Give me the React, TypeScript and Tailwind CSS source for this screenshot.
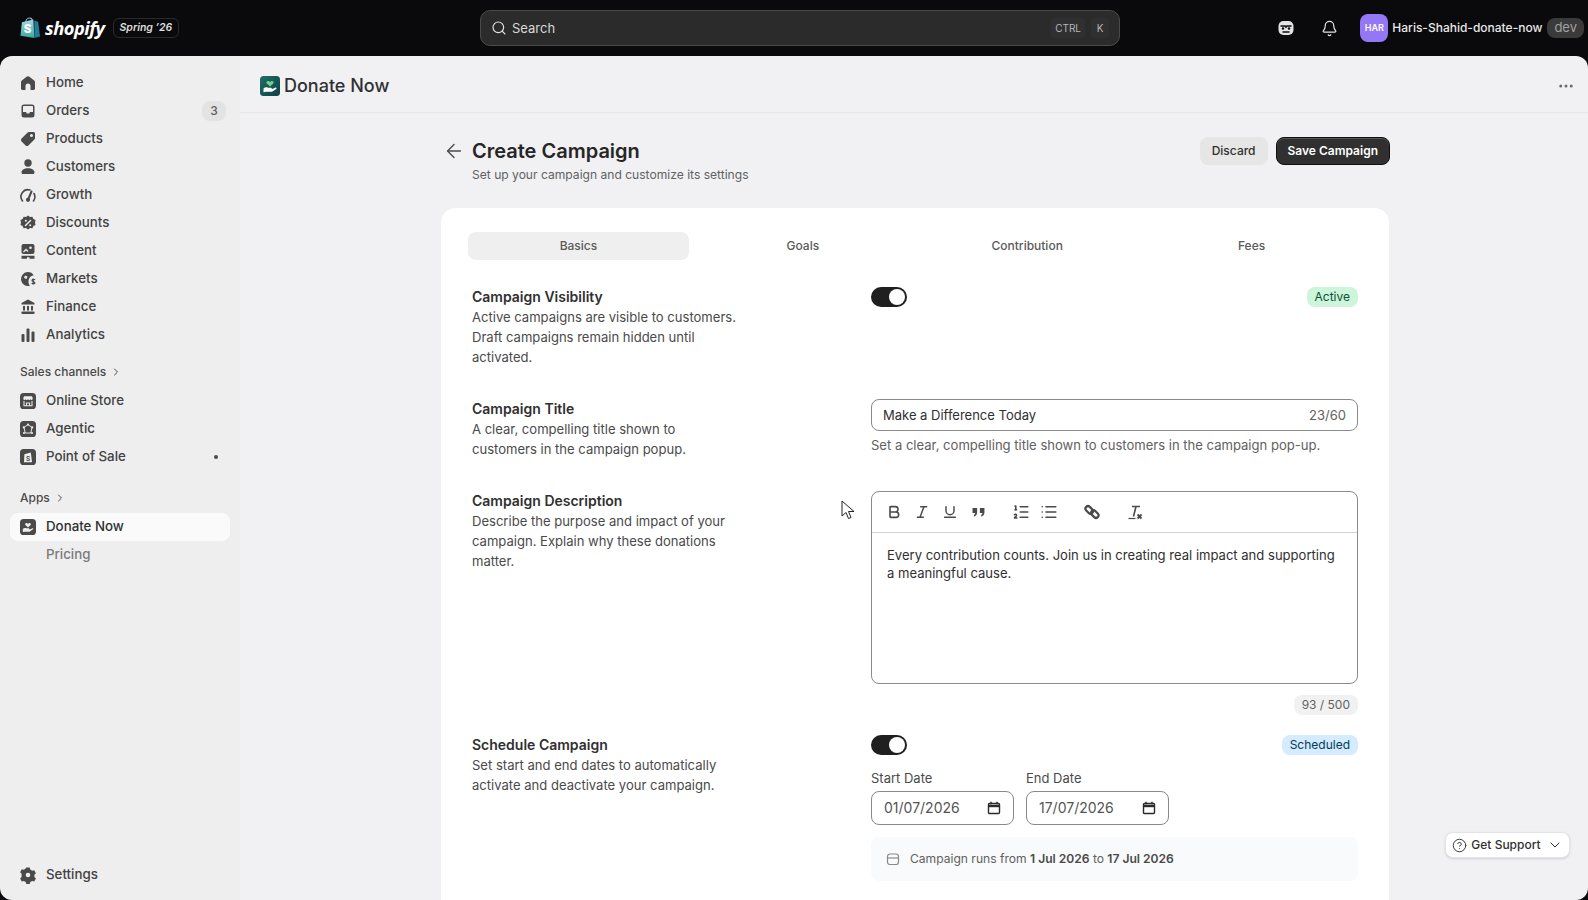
import { ArrowLeft, Bell, Bold, ChevronDown, ChevronRight, CircleHelp, Italic, List, ListOrdered, MoreHorizontal, Search, Underline } from 'lucide-react';
import type { ReactNode } from 'react';

const fill = 'w-5 h-5 shrink-0 text-[#4a4a4a]';

const HomeIcon = () => (
  <svg viewBox="0 0 20 20" className={fill} fill="currentColor"><path d="M10 3.2c-.5 0-1 .2-1.400.5L3.800 7.500c-.5.4-.8 1-.8 1.700v6.300c0 .8.700 1.500 1.500 1.500H7.500V13a2.500 2.500 0 0 1 5 0v4h3c.8 0 1.500-.7 1.500-1.500V9.200c0-.7-.3-1.300-.8-1.700l-4.800-3.800c-.4-.3-.9-.5-1.400-.5Z" /></svg>
);
const OrdersIcon = () => (
  <svg viewBox="0 0 20 20" className={fill} fill="currentColor"><path fillRule="evenodd" d="M6 3.500A2.500 2.500 0 0 0 3.500 6v8A2.500 2.500 0 0 0 6 16.500h8a2.500 2.500 0 0 0 2.500-2.500V6A2.500 2.500 0 0 0 14 3.500H6Zm-1 7.500V6c0-.6.400-1 1-1h8c.6 0 1 .4 1 1v5h-2.500c-.6 0-1 .5-1.100 1l-.1.500H8.700l-.1-.5c-.1-.5-.5-1-1.100-1H5Z" /></svg>
);
const TagIcon = () => (
  <svg viewBox="0 0 20 20" className={fill} fill="currentColor"><path fillRule="evenodd" d="M11 3h4.500C16.300 3 17 3.700 17 4.500V9c0 .5-.2 1-.6 1.400l-6 6c-.8.800-2 .800-2.800 0l-4-4c-.8-.8-.8-2 0-2.800l6-6C10 3.200 10.500 3 11 3Zm2.500 5a1.500 1.500 0 1 0 0-3 1.500 1.500 0 0 0 0 3Z" /></svg>
);
const PersonIcon = () => (
  <svg viewBox="0 0 20 20" className={fill} fill="currentColor"><circle cx="10" cy="6" r="3.700" /><path d="M3.500 15.500c0-2.500 2.500-4.200 6.500-4.200s6.500 1.700 6.500 4.200c0 1-.8 1.500-1.700 1.500H5.200c-.9 0-1.700-.5-1.700-1.500Z" /></svg>
);
const GrowthIcon = () => (
  <svg viewBox="0 0 20 20" className={fill} fill="none" stroke="currentColor" strokeWidth="1.600" strokeLinecap="round"><path d="M4.500 16a7 7 0 0 1 7.500-11" /><path d="M16 8.500a7 7 0 0 1-.5 7.500" /><path d="M13.500 6.500 10.500 13.500" strokeWidth="2" /><circle cx="10" cy="14.800" r="1.300" fill="currentColor" /></svg>
);
const DiscountIcon = () => (
  <svg viewBox="0 0 20 20" className={fill}><path fill="currentColor" d="M10 2.500l2 1.400 2.400-.2 1 2.200 2.100 1.200-.5 2.400.5 2.400-2.100 1.200-1 2.200-2.400-.2-2 1.400-2-1.400-2.400.2-1-2.200-2.100-1.200.5-2.400-.5-2.400 2.100-1.200 1-2.200 2.400.2Z" /><path d="M12.500 7.500l-5 5" stroke="#eee" strokeWidth="1.500" strokeLinecap="round" /><circle cx="7.800" cy="7.800" r="1" fill="#eee" /><circle cx="12.200" cy="12.200" r="1" fill="#eee" /></svg>
);
const ContentIcon = () => (
  <svg viewBox="0 0 20 20" className={fill}><rect x="3.500" y="3" width="13" height="10" rx="2" fill="currentColor" /><path d="M5.500 11l2.500-2.500 2 2" stroke="#eee" strokeWidth="1.300" fill="none" /><circle cx="12.500" cy="6.800" r="1.300" fill="#eee" /><path d="M3.500 15.500h13M3.500 17h5.500M11.500 17h5" stroke="currentColor" strokeWidth="1.300" /></svg>
);
const MarketsIcon = () => (
  <svg viewBox="0 0 20 20" className={fill}><path fill="currentColor" d="M10 3a7 7 0 1 0 2 13.700c-1-1-1.500-2.400-1.500-4 0-3.500 2.200-6 5.300-6.400A7 7 0 0 0 10 3Z" /><path d="M7 6.500l2.500 1-1 2.500-2.500-1Z" fill="#eee" /><path d="M17 10.800c-.4-.6-2.500-1-3 .3-.5 1.500 3 1.200 2.900 2.800-.1 1.200-2.500 1.100-3.300.4M15.200 9.500v6" stroke="currentColor" strokeWidth="1.200" fill="none" /></svg>
);
const FinanceIcon = () => (
  <svg viewBox="0 0 20 20" className={fill} fill="currentColor"><path d="M10 2.500 3.500 6v1.500h13V6L10 2.500Z" /><path d="M5 9h2v4.500H5zM9 9h2v4.500H9zM13 9h2v4.500h-2z" /><rect x="3.500" y="14.500" width="13" height="2.500" rx=".8" /></svg>
);
const AnalyticsIcon = () => (
  <svg viewBox="0 0 20 20" className={fill} fill="currentColor"><rect x="3.500" y="9" width="3" height="8" rx="1" /><rect x="8.500" y="3.500" width="3" height="13.500" rx="1" /><rect x="13.500" y="6.500" width="3" height="10.500" rx="1" /></svg>
);
const SettingsIcon = () => (
  <svg viewBox="0 0 20 20" className={fill}><path fill="currentColor" d="M8.300 2.800h3.400l.6 2 1.900 1.100 2-.5 1.700 3-1.500 1.500v2.200l1.500 1.500-1.700 3-2-.5-1.900 1.100-.6 2H8.300l-.6-2-1.900-1.100-2 .5-1.700-3 1.500-1.500V8.900L2.100 7.400l1.700-3 2 .5 1.900-1.100Z" transform="translate(0 -.2)" /><circle cx="10" cy="10" r="2.300" fill="#eee" /></svg>
);
const Tile = ({ children }: { children: ReactNode }) => (
  <svg viewBox="0 0 20 20" className="w-4 h-4 shrink-0 m-0.5"><rect width="20" height="20" rx="4.500" fill="#4a4a4a" />{children}</svg>
);
const StoreIcon = () => (
  <Tile><path d="M4 7l1-3h10l1 3c0 2-2.500 2-3 .8C12.500 9 10.700 9 10 7.800 9.300 9 7.500 9 7 7.800 6.500 9 4 9 4 7Z" fill="#eee" /><path d="M5 10v6h10v-6M8 16v-3.500h4V16" stroke="#eee" strokeWidth="1.300" fill="none" /></Tile>
);
const AgenticIcon = () => (
  <Tile><path d="M10 4.500 15 8l-1.500 7h-7L5 8Z" stroke="#eee" strokeWidth="1.200" fill="none" /><circle cx="10" cy="4.500" r="1.300" fill="#eee" /><circle cx="4.700" cy="8" r="1.300" fill="#eee" /><circle cx="15.300" cy="8" r="1.300" fill="#eee" /><circle cx="5" cy="15" r="1.300" fill="#eee" /><circle cx="15" cy="15" r="1.300" fill="#eee" /></Tile>
);
const PosIcon = () => (
  <Tile><path d="M5.500 6.500 13.500 4.500 15 16.500H5Z" fill="#eee" /><text x="10" y="14.500" fontSize="8" fontWeight="700" textAnchor="middle" fill="#4a4a4a" fontFamily="Inter, sans-serif">S</text></Tile>
);
const DonateTile = () => (
  <Tile><path d="M10 10.500 6.800 7.500c-1.400-1.500.8-3.500 2.300-2.200l.9.800.9-.8c1.500-1.300 3.700.7 2.300 2.200Z" fill="#eee" /><path d="M3.500 12.500c1.500-1.500 3-1.500 4.500-.8h3c1 0 1 1.500 0 1.500H9l4-.5 2.500-1.200c1-.3 1.500.8.700 1.400L12 15.800H6l-2.500.5Z" fill="#eee" /></Tile>
);

const mainNav = [
  { label: 'Home', icon: <HomeIcon /> },
  { label: 'Orders', icon: <OrdersIcon />, badge: '3' },
  { label: 'Products', icon: <TagIcon /> },
  { label: 'Customers', icon: <PersonIcon /> },
  { label: 'Growth', icon: <GrowthIcon /> },
  { label: 'Discounts', icon: <DiscountIcon /> },
  { label: 'Content', icon: <ContentIcon /> },
  { label: 'Markets', icon: <MarketsIcon /> },
  { label: 'Finance', icon: <FinanceIcon /> },
  { label: 'Analytics', icon: <AnalyticsIcon /> },
];

const NavItem = ({ icon, label, badge, dot, active }: { icon?: ReactNode; label: string; badge?: string; dot?: boolean; active?: boolean }) => (
  <div className={`h-7 flex items-center gap-2 px-2 rounded-lg ${active ? 'bg-[#fafafa] text-[#303030]' : 'text-[#424242]'}`}>
    {icon ?? <span className="w-5 h-5 shrink-0" />}
    <span className={`text-[13.300px] font-medium flex-1 ${icon ? '' : 'text-[#7a7a7a]'}`}>{label}</span>
    {badge && <span className="w-6 h-5 -mr-1 rounded-lg bg-[#e3e3e3] text-[#616161] text-xs font-medium flex items-center justify-center">{badge}</span>}
    {dot && <span className="w-1 h-1 mr-1 rounded-full bg-[#4a4a4a]" />}
  </div>
);

const SectionHead = ({ label }: { label: string }) => (
  <div className="h-5 px-2.5 flex items-center gap-1 text-xs font-medium text-[#4a4a4a]">
    {label}
    <ChevronRight className="w-3 h-3" strokeWidth={2} />
  </div>
);

const Sidebar = () => (
  <aside className="w-60 shrink-0 bg-[#eeeeee] flex flex-col justify-between px-2.5 pt-[13px] pb-[11px]">
    <div>
      {mainNav.map((n) => <NavItem key={n.label} {...n} />)}
      <div className="mt-[13px] mb-[5px]"><SectionHead label="Sales channels" /></div>
      <NavItem icon={<StoreIcon />} label="Online Store" />
      <NavItem icon={<AgenticIcon />} label="Agentic" />
      <NavItem icon={<PosIcon />} label="Point of Sale" dot />
      <div className="mt-[17px] mb-[5px]"><SectionHead label="Apps" /></div>
      <NavItem icon={<DonateTile />} label="Donate Now" active />
      <NavItem label="Pricing" />
    </div>
    <NavItem icon={<SettingsIcon />} label="Settings" />
  </aside>
);

const TopBar = () => (
  <header className="h-14 shrink-0 flex items-center text-white">
    <div className="w-[480px] shrink-0 flex items-center pl-5">
      <svg viewBox="0 0 22 24" className="w-[21px] h-[23px]">
        <defs><linearGradient id="bag" x1="0" y1="0" x2="0" y2="1"><stop offset="0" stopColor="#a9d8ee" /><stop offset="1" stopColor="#3aa89a" /></linearGradient></defs>
        <path d="M2 5.500 14 2.500 15 22 0.500 19.500Z" fill="url(#bag)" />
        <path d="M15 3.500 19 5l2 15.500-6 1.500Z" fill="#1f7f96" />
        <path d="M6 6c0-3 2-5 4-5s3 2 3 4" stroke="#8fc7da" strokeWidth="1.300" fill="none" />
        <text x="8" y="17" fontSize="12" fontWeight="800" textAnchor="middle" fill="#fff" fontFamily="Inter, sans-serif">S</text>
      </svg>
      <span className="ml-1 text-[18.300px] leading-none font-bold italic tracking-[-0.5px] font-['Open_Sans',sans-serif]">shopify</span>
      <span className="ml-2 h-5 px-1.5 rounded-md border border-[#2a2a2a] flex items-center text-[10.500px] font-semibold italic text-[#dedede]">Spring ’26</span>
    </div>
    <div className="w-[640px] h-9 shrink-0 rounded-[10px] bg-[#2b2b2b] border border-[#4a4a4a] flex items-center pl-2.5 pr-2.5">
      <Search className="w-4 h-4 text-[#e3e3e3]" strokeWidth={1.700} />
      <span className="ml-[5px] pt-px text-[13px] text-[#d8d8d8]">Search</span>
      <span className="ml-auto h-5 px-1 pt-px rounded bg-[#303030] text-[10px] text-[#b5b5b5] flex items-center">CTRL</span>
      <span className="ml-1.5 w-[18px] h-5 pt-px rounded bg-[#303030] text-[10px] text-[#b5b5b5] flex items-center justify-center">K</span>
    </div>
    <div className="flex-1 flex items-center justify-end pr-1">
      <svg viewBox="0 0 20 20" className="w-5 h-5 mr-[25px]"><rect x="2.500" y="3" width="15" height="14" rx="5" fill="#e3e3e3" /><path d="M4.500 8h4.500l1 1 1-1h4.500" stroke="#0a0a0c" strokeWidth="1.700" fill="none" /><circle cx="7" cy="10.500" r="1.200" fill="#0a0a0c" /><circle cx="13" cy="10.500" r="1.200" fill="#0a0a0c" /><path d="M6.500 14h7" stroke="#0a0a0c" strokeWidth="1.500" /></svg>
      <Bell className="w-[17px] h-[17px] mr-[22px] text-[#e3e3e3]" strokeWidth={1.700} />
      <span className="w-7 h-7 rounded-lg bg-[#9377f7] text-[9px] font-semibold flex items-center justify-center">HAR</span>
      <span className="ml-1 text-xs font-medium text-[#e8e8e8]">Haris-Shahid-donate-now</span>
      <span className="ml-[5px] h-5 px-[7px] rounded-lg bg-[#3a3a3a] text-[13px] text-[#a0a0a0] flex items-center">dev</span>
    </div>
  </header>
);

const Toggle = () => (
  <div className="w-9 h-5 rounded-full bg-[#1f1f1f] flex items-center justify-end pr-0.5">
    <span className="w-4 h-4 rounded-full bg-white" />
  </div>
);

const Row = ({ title, desc, children, className }: { title: string; desc: string; children: ReactNode; className?: string }) => (
  <div className={`flex ${className ?? ''}`}>
    <div className="w-[399px] shrink-0">
      <h3 className="text-sm leading-5 font-semibold text-[#303030]">{title}</h3>
      <p className="text-[13.050px] leading-5 text-[#4a4a4a] max-w-[267px]">{desc}</p>
    </div>
    <div className="flex-1 min-w-0">{children}</div>
  </div>
);

const CalendarFill = () => (
  <svg viewBox="0 0 14 14" className="w-3.5 h-3.5 text-[#2a2a2a]" fill="none" stroke="currentColor" strokeWidth="1.400"><rect x="1.500" y="2.500" width="11" height="10" rx="1" /><path d="M1.500 5h11" strokeWidth="2.400" /><path d="M4 .8v2.500M10 .8v2.500" /></svg>
);

const DateField = ({ label, value }: { label: string; value: string }) => (
  <div className="w-[143px]">
    <div className="text-[13px] leading-5 text-[#4a4a4a] mb-[3px]">{label}</div>
    <div className="h-[34px] rounded-lg border border-[#8a8a8a] bg-white flex items-center justify-between pl-3 pr-3 text-sm text-[#555555]">
      {value}
      <CalendarFill />
    </div>
  </div>
);

const ToolBtn = ({ children }: { children: ReactNode }) => (
  <span className="w-7 h-7 flex items-center justify-center text-[#4a4a4a]">{children}</span>
);

const Toolbar = () => (
  <div className="h-[41px] shrink-0 border-b border-[#d4d4d4] flex items-center gap-[15px] pl-2">
    <div className="flex">
      <ToolBtn><Bold className="w-4 h-4" strokeWidth={2.400} /></ToolBtn>
      <ToolBtn><Italic className="w-4 h-4" strokeWidth={2.200} /></ToolBtn>
      <ToolBtn><Underline className="w-4 h-4" strokeWidth={2.200} /></ToolBtn>
      <ToolBtn>
        <svg viewBox="0 0 14 12" className="w-[13px] h-[11px]" fill="currentColor"><path d="M.5 1h5v5c0 2.500-1.500 4-3.500 4.500V8.500c.8-.3 1.300-1 1.300-2H.5ZM8.500 1h5v5c0 2.500-1.500 4-3.500 4.500V8.500c.8-.3 1.300-1 1.300-2H8.500Z" /></svg>
      </ToolBtn>
    </div>
    <div className="flex">
      <ToolBtn><ListOrdered className="w-[18px] h-[18px]" strokeWidth={2.200} /></ToolBtn>
      <ToolBtn><List className="w-[18px] h-[18px]" strokeWidth={2.200} /></ToolBtn>
    </div>
    <ToolBtn>
      <svg viewBox="0 0 16 16" className="w-4 h-4" fill="none" stroke="currentColor" strokeWidth="2.200"><rect x="1" y="3.400" width="8.500" height="5" rx="2.500" transform="rotate(45 5.250 5.900)" /><rect x="6.500" y="7.600" width="8.500" height="5" rx="2.500" transform="rotate(45 10.750 10.100)" /></svg>
    </ToolBtn>
    <ToolBtn>
      <svg viewBox="0 0 16 16" className="w-4 h-4"><path d="M5 2.500h8M9 2.500 6.500 12.500" stroke="currentColor" strokeWidth="1.600" fill="none" /><path d="M1.500 14.500h7" stroke="currentColor" strokeWidth="1.200" /><path d="M10.500 10.500l4 4M14.500 10.500l-4 4" stroke="currentColor" strokeWidth="1.800" /></svg>
    </ToolBtn>
  </div>
);

const DonateLogo = () => (
  <svg viewBox="0 0 20 20" className="w-5 h-5 shrink-0">
    <defs><linearGradient id="dn" x1="0" y1="0" x2="1" y2="1"><stop offset="0" stopColor="#1f6f66" /><stop offset="1" stopColor="#0e3f47" /></linearGradient></defs>
    <rect width="20" height="20" rx="3.500" fill="url(#dn)" />
    <path d="M10 10.500 6.800 7.500c-1.400-1.500.8-3.500 2.300-2.200l.9.800.9-.8c1.500-1.300 3.700.7 2.300 2.200Z" fill="#6fd08c" />
    <path d="M3.500 12.500c1.500-1.500 3-1.500 4.500-.8h3c1 0 1 1.500 0 1.500H9l4-.5 2.500-1.200c1-.3 1.500.8.700 1.400L12 15.800H6l-2.500.5Z" fill="#fff" />
  </svg>
);

const tabs = ['Basics', 'Goals', 'Contribution', 'Fees'];

const Main = () => (
  <main className="flex-1 min-w-0 bg-[#f1f1f4] flex flex-col overflow-hidden">
    <div className="h-[57px] shrink-0 border-b border-[#e6e6e9] flex items-center pl-5 pr-[13px] pt-[3px]">
      <DonateLogo />
      <span className="ml-1 text-lg font-medium text-[#303030]">Donate Now</span>
      <MoreHorizontal className="ml-auto w-[18px] h-[18px] text-[#6b6b6b]" />
    </div>
    <div className="w-[948px] ml-[201px] shrink-0">
      <div className="h-[95px] flex items-start pt-6">
        <ArrowLeft className="w-[22px] h-[22px] mt-[3px] ml-0.5 text-[#4a4a4a]" strokeWidth={1.500} />
        <div className="ml-[7px]">
          <h1 className="text-xl leading-7 font-semibold text-[#262626]">Create Campaign</h1>
          <p className="text-[12.080px] leading-5 text-[#616161]">Set up your campaign and customize its settings</p>
        </div>
        <button className="ml-auto h-7 px-3 rounded-lg bg-[#e6e6e6] text-xs font-medium text-[#303030]">Discard</button>
        <button className="ml-2 -mr-px h-7 px-[11px] rounded-lg bg-[#303030] border border-[#111] shadow-[inset_0_1px_0_#555] text-xs font-semibold text-white whitespace-nowrap">Save Campaign</button>
      </div>
      <section className="bg-white rounded-[14px] border border-white pt-[23px] px-[26px] h-[800px]">
        <div className="flex gap-[3.500px]">
          {tabs.map((t, i) => (
            <div key={t} className={`flex-1 h-7 rounded-lg flex items-center justify-center text-xs font-medium text-[#5a5a5a] ${i === 0 ? 'bg-[#efefef]' : ''}`}>{t}</div>
          ))}
        </div>
        <div className="px-1 pt-[27px]">
          <Row title="Campaign Visibility" desc="Active campaigns are visible to customers. Draft campaigns remain hidden until activated." className="mb-8">
            <div className="flex items-center justify-between">
              <Toggle />
              <span className="h-5 px-2 rounded-lg bg-[#cdf5dc] text-xs text-[#0c5132] flex items-center">Active</span>
            </div>
          </Row>
          <Row title="Campaign Title" desc="A clear, compelling title shown to customers in the campaign popup." className="mb-8">
            <div className="h-8 pt-px rounded-lg border border-[#8a8a8a] flex items-center justify-between px-[11px] text-[13px] text-[#303030]">
              <span>Make a Difference Today</span>
              <span className="text-[#616161]">23/60</span>
            </div>
            <p className="mt-1 text-[13.050px] leading-5 text-[#616161]">Set a clear, compelling title shown to customers in the campaign pop-up.</p>
          </Row>
          <Row title="Campaign Description" desc="Describe the purpose and impact of your campaign. Explain why these donations matter." className="mb-5">
            <div className="h-[193px] rounded-lg border border-[#8a8a8a] flex flex-col">
              <Toolbar />
              <p className="px-[15px] pt-[13px] text-[13.050px] leading-[18px] text-[#303030]">Every contribution counts. Join us in creating real impact and supporting a meaningful cause.</p>
            </div>
            <div className="mt-[11px] flex justify-end">
              <span className="h-5 px-2 rounded-lg bg-[#f1f1f1] text-xs text-[#616161] flex items-center">93 / 500</span>
            </div>
          </Row>
          <Row title="Schedule Campaign" desc="Set start and end dates to automatically activate and deactivate your campaign.">
            <div className="flex items-center justify-between">
              <Toggle />
              <span className="h-5 px-2 rounded-lg bg-[#d5ebff] text-xs text-[#003a5a] flex items-center">Scheduled</span>
            </div>
            <div className="mt-[13px] flex gap-3">
              <DateField label="Start Date" value="01/07/2026" />
              <DateField label="End Date" value="17/07/2026" />
            </div>
            <div className="mt-3 h-11 rounded-lg bg-[#f9fafb] flex items-center pl-[15px] text-[12.080px] text-[#616161]">
              <svg viewBox="0 0 14 14" className="w-3.5 h-3.5 mr-2.5 text-[#8a8a8a]" fill="none" stroke="currentColor" strokeWidth="1.200"><rect x="1.500" y="2" width="11" height="10.500" rx="2.500" /><path d="M1.500 6h11" /></svg>
              <span>Campaign runs from <b className="font-semibold text-[#4a4a4a]">1 Jul 2026</b> to <b className="font-semibold text-[#4a4a4a]">17 Jul 2026</b></span>
            </div>
          </Row>
        </div>
      </section>
    </div>
  </main>
);

export default function App() {
  return (
    <div className="relative h-screen w-full bg-[#0a0a0c] flex flex-col overflow-hidden font-['Inter',sans-serif]">
      <TopBar />
      <div className="flex-1 min-h-0 flex rounded-xl overflow-hidden">
        <Sidebar />
        <Main />
      </div>
      {/* mouse pointer */}
      <svg viewBox="0 0 14 20" className="absolute left-[841px] top-[500px] w-[14px] h-[20px]"><path d="M1 1v15l4-3.500 2.500 6 2.500-1-2.500-6H13Z" fill="#fff" stroke="#222" strokeWidth="1" /></svg>
      <div className="absolute left-[1445px] top-[832px] w-[125px] h-[26px] rounded-lg bg-white border border-[#e3e3e3] shadow-sm flex items-center justify-center gap-1 text-xs font-medium text-[#303030]">
        <CircleHelp className="w-[15px] h-[15px]" strokeWidth={1.500} />
        Get Support
        <ChevronDown className="w-4 h-4 ml-0.5" strokeWidth={1.500} />
      </div>
    </div>
  );
}
